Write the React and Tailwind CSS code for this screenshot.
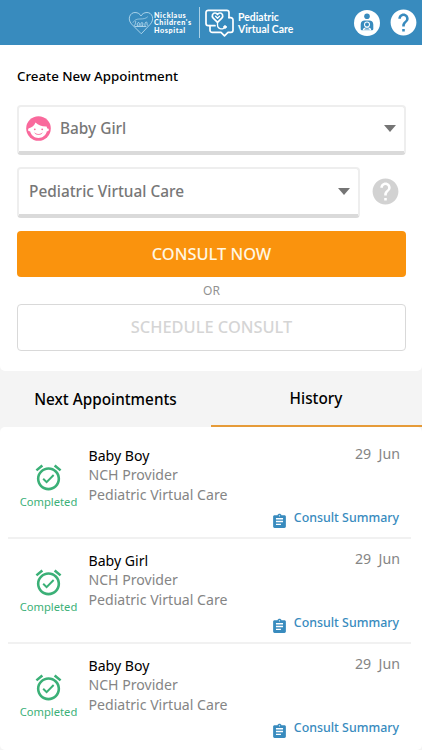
import React from "react";
import { MdAlarmOn, MdAssignment, MdHelp } from "react-icons/md";

const visits = [
  { name: "Baby Boy", date: "29  Jun" },
  { name: "Baby Girl", date: "29  Jun" },
  { name: "Baby Boy", date: "29  Jun" },
];

function HeartLogo() {
  return (
    <svg className="h-[24px] w-[26px] shrink-0" viewBox="0 0 26 24" fill="none" stroke="#c4e2f2" strokeWidth="0.8" strokeLinecap="round" strokeLinejoin="round">
      <path d="M13 22.500 3.500 13C-1 8 2 1.500 7 1.500c3 0 5 1.500 6 3.500 1-2 3-3.500 6-3.500 5 0 8 6.500 3.500 11.500Z" />
      <path d="M5 11.500c2-3 4-3.500 7-3.500 3.500 0 6-.500 7.500-2" strokeWidth="0.6" />
      <path d="M6.500 14.500c1-1 .800-2.500 1.200-4M9.500 15c-1-1.500 0-3.500 1-3.500s1.200 1.500.500 3.500M13 15c-.500-2 0-3.500 1-3.500s1.200 2 .500 3.500M17 15c-.500-2 .500-4.500 1.500-4s0 3 1 3.500M7 15.500h11" />
    </svg>
  );
}

function CareLogo() {
  return (
    <svg className="h-[28px] w-[30px] shrink-0" viewBox="0 0 30 28" fill="none" stroke="#fff" strokeWidth="1.700" strokeLinecap="round" strokeLinejoin="round">
      <path d="M24 8.500V3.500A2.200 2.200 0 0 0 21.800 1.300H3.200A2.200 2.200 0 0 0 1 3.500v11A2.200 2.200 0 0 0 3.200 16.700H10" />
      <path d="M24 8.700h1.800A2.200 2.200 0 0 1 28 10.900v10.300a2.200 2.200 0 0 1-2.200 2.200H23L19.500 26.800 16 23.400H7.200A2.200 2.200 0 0 1 5 21.200v-4.500" />
      <path d="M12.500 13.300 8.200 9.200c-2-2.200-.500-5.200 1.800-5.200 1.200 0 2 .600 2.500 1.500.500-.900 1.300-1.500 2.500-1.500 2.300 0 3.800 3 1.800 5.200Z" />
      <path d="m10.600 7.300 1.900 2 2-2M12.500 13.300v2.700c0 4.500 6.500 5 7 2" strokeWidth="1.300" />
      <circle cx="20" cy="18" r="1.300" fill="#fff" strokeWidth="1" />
    </svg>
  );
}

function GuardianIcon() {
  return (
    <svg className="size-[26px]" viewBox="0 0 26 26">
      <circle cx="13" cy="13" r="13" fill="#fff" />
      <g fill="#388bbe">
        <circle cx="13" cy="6.200" r="2.800" />
        <path d="M6.700 19v-4.500c0-2.500 1.600-4 4-4h4.600c2.400 0 4 1.500 4 4V19a1.200 1.200 0 0 1-1.200 1.200H7.900A1.200 1.200 0 0 1 6.700 19Z" />
      </g>
      <circle cx="13" cy="14.500" r="3" fill="#fff" />
      <path d="M8.800 20.200c0-2.200 1.800-3 4.200-3s4.200.800 4.200 3Z" fill="#fff" />
      <circle cx="13" cy="14.500" r="2" fill="#388bbe" />
      <path d="M10.200 19.500c.4-1 1.500-1.300 2.800-1.300s2.400.300 2.800 1.300Z" fill="#388bbe" />
    </svg>
  );
}

function GirlIcon() {
  return (
    <svg className="size-[25px]" viewBox="0 0 25 25">
      <circle cx="12.500" cy="12.500" r="12.300" fill="#f9699c" />
      <path d="M2.400 12.400c3.800-1 6-3 7.100-5.900 2.800 2.900 6.500 4 11.100 3.900l.6 2.200c1.200 0 1.700.500 1.600 1.300-.1 1-.8 1.500-1.900 1.400-1 4-4.200 6.700-8.400 6.700s-7.300-2.700-8.400-6.700c-1.200.1-2-.400-2-1.500Z" fill="#fff" />
      <g fill="#f9699c">
        <circle cx="8.800" cy="13.300" r="0.900" />
        <circle cx="16.200" cy="13.300" r="0.900" />
      </g>
      <path d="M9 17.200c1.800 1.800 5.200 1.800 7 0" fill="none" stroke="#f9699c" strokeWidth="1" strokeLinecap="round" />
    </svg>
  );
}

function Caret() {
  return (
    <svg className="h-[7px] w-[12px]" viewBox="0 0 12 7">
      <path d="M0 0h12L6 7Z" fill="#757575" />
    </svg>
  );
}

function Visit({ name, date, last }) {
  return (
    <li className={"ml-2 mr-[11px] flex h-[104.800px] " + (last ? "" : "border-b-2 border-[#f1f1f1]")}>
      <div className="ml-[10px] flex w-[61px] shrink-0 flex-col items-center pt-[28px] text-[#3bb077]">
        <MdAlarmOn className="size-[31px]" />
        <span className="mt-px text-[11.200px] leading-[16px]">Completed</span>
      </div>
      <div className="ml-[9.500px] flex-1 whitespace-nowrap pt-[12px] text-[14.100px] leading-[20px] text-[#858585]">
        <p className="h-[19px] text-black">{name}</p>
        <p className="h-[20px]">NCH Provider</p>
        <p>Pediatric Virtual Care</p>
      </div>
      <div className="flex flex-col items-end pr-3 pt-[10px]">
        <span className="mr-[-1px] whitespace-pre text-[14.200px] leading-[20px] text-[#858585]">{date}</span>
        <div className="mt-[44px] flex items-start gap-[6px] text-[#388bbe]">
          <MdAssignment className="mt-[5px] size-[17px]" />
          <span className="text-[12.400px] font-medium leading-[20px]">Consult Summary</span>
        </div>
      </div>
    </li>
  );
}

export default function App() {
  return (
    <div className="h-[750px] w-[422px] overflow-hidden bg-[#f4f4f4] font-['Noto_Sans',sans-serif]">
      <header className="flex h-[45px] items-center bg-[#388bbe] pl-[128px] pr-[6px] text-white">
        <HeartLogo />
        <div className="grid w-[44px] gap-y-0 whitespace-nowrap pt-px font-['Lato',sans-serif] text-[7.200px] font-black leading-[7.500px] tracking-[0.600px]">
          <p>Nicklaus</p>
          <p>Children's</p>
          <p>Hospital</p>
        </div>
        <div className="ml-px h-[31px] w-px bg-[#a9d0e6]" />
        <div className="ml-[5px]"><CareLogo /></div>
        <div className="ml-[3px] whitespace-nowrap font-['Lato',sans-serif] text-[10.400px] font-bold leading-[12px]">
          <p>Pediatric</p>
          <p>Virtual Care</p>
        </div>
        <div className="ml-auto flex items-center gap-[8px]">
          <GuardianIcon />
          <MdHelp className="-mr-[3px] size-[31px]" />
        </div>
      </header>

      <main className="h-[326px] rounded-b-[5px] bg-white pl-[17px] pr-[16px] pt-[21px]">
        <h1 className="h-[39px] text-[13.300px] font-medium leading-[20px] text-black">Create New Appointment</h1>
        <div className="flex h-[50px] items-center rounded-[4px] border-2 border-b-4 border-[#eee] border-b-[#dadada] pb-px pl-[7px] pr-[8px]">
          <GirlIcon />
          <span className="ml-[9px] flex-1 text-[15.400px] font-medium text-[#777]">Baby Girl</span>
          <Caret />
        </div>
        <div className="mt-[12px] flex items-center">
          <div className="flex h-[51px] w-[343px] items-center justify-between rounded-[4px] border-2 border-b-4 border-[#eee] border-b-[#dadada] pl-[10px] pr-[8px]">
            <span className="text-[15.400px] font-medium text-[#777]">Pediatric Virtual Care</span>
            <Caret />
          </div>
          <MdHelp className="mb-[2px] ml-[10px] size-[31px] text-[#d2d2d2]" />
        </div>
        <button className="mt-[13px] block h-[46px] w-full rounded-[4px] bg-[#fa930d] text-[16.400px] font-medium text-[#fff7e3]">CONSULT NOW</button>
        <p className="h-[27px] text-center text-[12px] leading-[27px] text-[#929292]">OR</p>
        <button className="block h-[47px] w-full rounded-[4px] border-[1.500px] border-[#d9d9d9] text-[16.400px] font-medium text-[#d5d5d5]">SCHEDULE CONSULT</button>
      </main>

      <nav className="flex h-[56px] text-[15.300px] font-medium text-black">
        <div className="flex w-[211px] items-center justify-center">Next Appointments</div>
        <div className="flex w-[211px] items-center justify-center border-b-2 border-[#e69b38] pr-px">History</div>
      </nav>

      <ul className="h-[323px] overflow-hidden rounded-[5px] bg-white pt-[7px]">
        {visits.map((visit, index) => (
          <Visit key={index} {...visit} last={index === 2} />
        ))}
      </ul>
    </div>
  );
}
